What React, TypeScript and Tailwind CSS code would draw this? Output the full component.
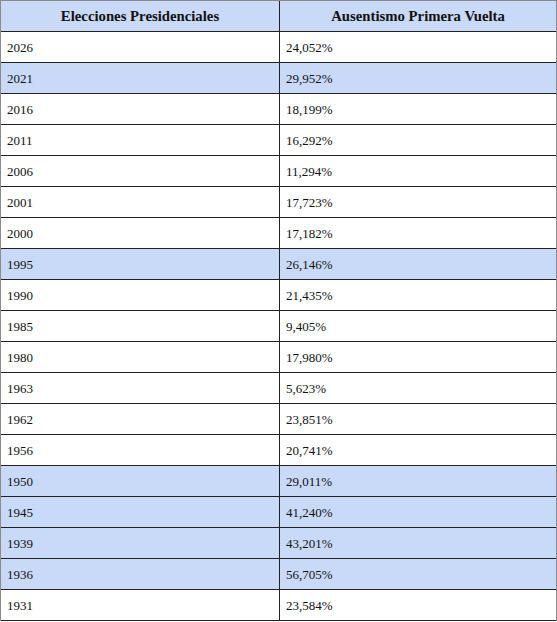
const rows: [string, string, boolean][] = [
  ["2026", "24,052%", false],
  ["2021", "29,952%", true],
  ["2016", "18,199%", false],
  ["2011", "16,292%", false],
  ["2006", "11,294%", false],
  ["2001", "17,723%", false],
  ["2000", "17,182%", false],
  ["1995", "26,146%", true],
  ["1990", "21,435%", false],
  ["1985", "9,405%", false],
  ["1980", "17,980%", false],
  ["1963", "5,623%", false],
  ["1962", "23,851%", false],
  ["1956", "20,741%", false],
  ["1950", "29,011%", true],
  ["1945", "41,240%", true],
  ["1939", "43,201%", true],
  ["1936", "56,705%", true],
  ["1931", "23,584%", false],
]

const cell = "flex items-center font-['Liberation_Serif',serif]"

export default function App() {
  return (
    <div className="h-[622px] w-[557px] overflow-hidden bg-white text-[13px] text-[#111]">
      <div className="border-x border-t border-[#8a8a8a]">
        <div className="grid h-[31px] grid-cols-[279px_1fr] border-b border-[#222] bg-[#c9daf8] text-[14.75px] font-bold">
          <div className={`${cell} justify-center border-r border-[#222]`}>Elecciones Presidenciales</div>
          <div className={`${cell} justify-center`}>Ausentismo Primera Vuelta</div>
        </div>
        {rows.map(([year, value, hl]) => (
          <div
            key={year}
            className={`grid h-[31px] grid-cols-[279px_1fr] border-b border-[#222] ${hl ? "bg-[#c9daf8]" : "bg-white"}`}
          >
            <div className={`${cell} border-r border-[#222] pl-[6px] pt-[1px]`}>{year}</div>
            <div className={`${cell} pl-[6px] pt-[1px]`}>{value}</div>
          </div>
        ))}
      </div>
    </div>
  )
}
